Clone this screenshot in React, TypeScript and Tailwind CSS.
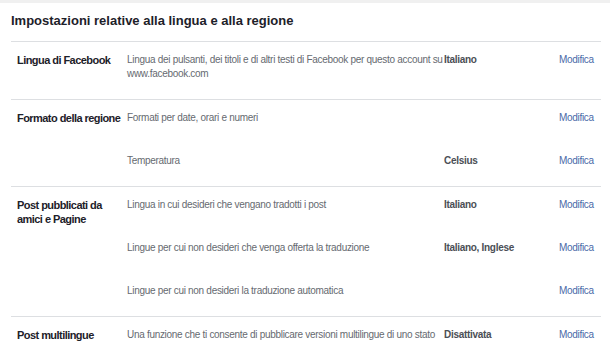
import React from 'react';

interface SubRow {
  description: string;
  value?: string;
}

interface Section {
  label: string;
  rows: SubRow[];
}

const sections: Section[] = [
  {
    label: 'Lingua di Facebook',
    rows: [
      {
        description:
          'Lingua dei pulsanti, dei titoli e di altri testi di Facebook per questo account su www.facebook.com',
        value: 'Italiano',
      },
    ],
  },
  {
    label: 'Formato della regione',
    rows: [
      { description: 'Formati per date, orari e numeri' },
      { description: 'Temperatura', value: 'Celsius' },
    ],
  },
  {
    label: 'Post pubblicati da amici e Pagine',
    rows: [
      { description: 'Lingua in cui desideri che vengano tradotti i post', value: 'Italiano' },
      { description: 'Lingue per cui non desideri che venga offerta la traduzione', value: 'Italiano, Inglese' },
      { description: 'Lingue per cui non desideri la traduzione automatica' },
    ],
  },
  {
    label: 'Post multilingue',
    rows: [
      {
        description: 'Una funzione che ti consente di pubblicare versioni multilingue di uno stato',
        value: 'Disattivata',
      },
    ],
  },
];

const SettingsSection: React.FC<{ section: Section }> = ({ section }) => (
  <div className="flex border-t border-[#dddfe2]">
    <div className="w-[116px] shrink-0 pl-[6px] pr-[1px] pt-[11px] text-[11px] leading-[14px] tracking-[-0.55px] font-bold text-[#1d2129]">
      {section.label}
    </div>
    <div className="flex-1 flex flex-col">
      {section.rows.map((row, i) => (
        <div key={i} className="flex pt-[11px] pb-[18px] text-[10px] leading-[14px] tracking-[-0.3px]">
          <div className="w-[317px] shrink-0 text-[#666a70]">{row.description}</div>
          <div className="w-[115px] shrink-0 font-bold text-[#4b4f56]">{row.value}</div>
          <div className="text-[#4a6aa8]">Modifica</div>
        </div>
      ))}
    </div>
  </div>
);

export default function App() {
  return (
    <div className="w-[610px] h-[355px] overflow-hidden bg-white font-['Liberation_Sans',Arial,sans-serif]">
      <div className="h-[3px] bg-[#f0f0f0]" />
      <div className="pl-[11px] pr-[9px]">
        <h2 className="pt-[9px] pb-[11px] text-[13px] leading-[18px] font-bold text-[#1d2129]">
          Impostazioni relative alla lingua e alla regione
        </h2>
        {sections.map((s) => (
          <SettingsSection key={s.label} section={s} />
        ))}
      </div>
    </div>
  );
}
